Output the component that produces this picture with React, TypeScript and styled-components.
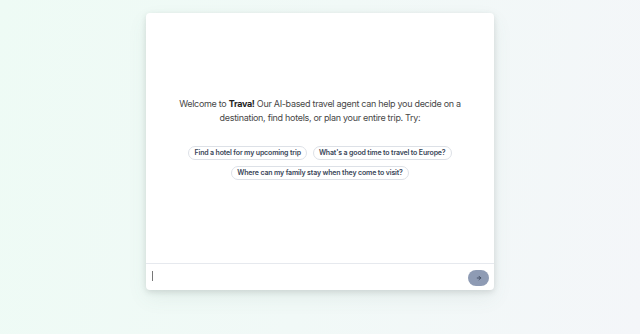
import styled, { createGlobalStyle } from 'styled-components';

const GlobalStyle = createGlobalStyle`
  html, body {
    margin: 0;
    height: 100%;
  }
  body {
    font-family: Inter, 'Noto Sans', sans-serif;
    background: linear-gradient(100deg, #eefbf5 0%, #f1f9f7 50%, #f4f6f9 100%);
  }
`;

const suggestions = [
  'Find a hotel for my upcoming trip',
  "What's a good time to travel to Europe?",
  'Where can my family stay when they come to visit?',
];

export default function App() {
  return (
    <>
      <GlobalStyle />
      <Page>
        <Card>
          <Messages>
            <Intro>
              Welcome to <strong>Trava!</strong> Our AI-based travel agent can
              help you decide on a destination, find hotels, or plan your
              entire trip. Try:
            </Intro>
            <Chips>
              {suggestions.map((s) => (
                <Chip key={s} type="button">
                  {s}
                </Chip>
              ))}
            </Chips>
          </Messages>
          <InputBar>
            <InputWrap>
              <Input autoFocus />
              <Caret />
            </InputWrap>
            <SendButton type="button" aria-label="Send">
              <svg width="6" height="6" viewBox="0 0 24 24" fill="none" stroke="#2f3a4d" strokeWidth="3" strokeLinecap="round" strokeLinejoin="round">
                <path d="M5 12h14" />
                <path d="m12 5 7 7-7 7" />
              </svg>
            </SendButton>
          </InputBar>
        </Card>
      </Page>
    </>
  );
}

const Page = styled.div`
  display: flex;
  justify-content: center;
  padding-top: 13px;
`;

const Card = styled.div`
  width: 348px;
  height: 277px;
  display: flex;
  flex-direction: column;
  background: #fff;
  border-radius: 4px;
  box-shadow: 0 2px 6px rgba(0, 0, 0, 0.12), 0 8px 20px rgba(80, 110, 100, 0.08);
  overflow: hidden;
`;

const Messages = styled.div`
  flex: 1;
  display: flex;
  flex-direction: column;
  align-items: center;
  justify-content: center;
  border-bottom: 1px solid #e6e9ee;
`;

const Intro = styled.p`
  margin: 0;
  max-width: 290px;
  text-align: center;
  font-size: 9px;
  letter-spacing: -0.3px;
  line-height: 14px;
  color: #474747;

  strong {
    font-weight: 700;
    color: #1f1f1f;
  }
`;

const Chips = styled.div`
  margin-top: 21px;
  display: flex;
  flex-wrap: wrap;
  justify-content: center;
  gap: 6px;
  max-width: 300px;
`;

const Chip = styled.button`
  height: 14px;
  padding: 0 5px;
  border: 1px solid #dde1e7;
  border-radius: 999px;
  background: #fff;
  font-family: Inter, 'Noto Sans', sans-serif;
  font-size: 7px;
  letter-spacing: -0.15px;
  font-weight: 600;
  color: #3a4659;
  line-height: 12px;
  cursor: pointer;
`;

const InputBar = styled.div`
  height: 26px;
  display: flex;
  align-items: center;
  padding: 0 5px;
  gap: 6px;
`;

const InputWrap = styled.div`
  position: relative;
  flex: 1;
  display: flex;
`;

const Input = styled.input`
  flex: 1;
  border: none;
  outline: none;
  padding: 0;
  font-family: Inter, 'Noto Sans', sans-serif;
  font-size: 11px;
  caret-color: #666;
  background: transparent;
`;

const Caret = styled.span`
  position: absolute;
  left: 1px;
  top: 50%;
  width: 1px;
  height: 10px;
  margin-top: -6px;
  background: #777;
`;

const SendButton = styled.button`
  width: 21px;
  height: 16px;
  border: none;
  border-radius: 999px;
  background: #8e9bb4;
  display: flex;
  align-items: center;
  justify-content: center;
  padding: 0;
  margin-top: 2px;
`;
